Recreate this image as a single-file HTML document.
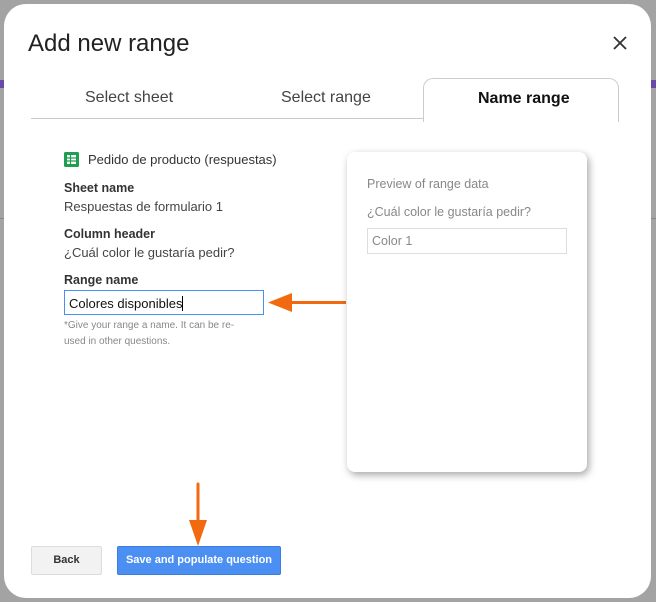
<!DOCTYPE html>
<html><head><meta charset="utf-8"><style>
*{margin:0;padding:0;box-sizing:border-box}
html,body{width:656px;height:602px;overflow:hidden;background:#a3a3a3;font-family:"Liberation Sans",sans-serif;position:relative}
.dlg{position:absolute;left:4px;top:4px;width:647px;height:594px;background:#fff;border-radius:22px}
.abs{position:absolute}
</style></head><body>
<div class="abs" style="left:0;top:80px;width:656px;height:8px;background:#6a4aa8"></div>
<div class="abs" style="left:0;top:218px;width:10px;height:1px;background:#888"></div>
<div class="abs" style="left:646px;top:218px;width:10px;height:1px;background:#888"></div>
<div class="dlg">
  <div class="abs" style="left:24px;top:26px;font-size:24px;color:#222">Add new range</div>
  <svg class="abs" style="left:609px;top:32px" width="14" height="14"><path d="M1 1L13 13M13 1L1 13" stroke="#333" stroke-width="1.8"/></svg>
  <div class="abs" style="left:27px;top:114px;width:398px;height:1px;background:#c8c8c8"></div>
  <div class="abs" style="left:419px;top:74px;width:196px;height:44px;border:1px solid #ccc;border-bottom:none;border-radius:10px 10px 0 0;background:#fff"></div>
  <div class="abs" style="left:81px;top:85px;font-size:16px;color:#444">Select sheet</div>
  <div class="abs" style="left:277px;top:85px;font-size:16px;color:#444">Select range</div>
  <div class="abs" style="left:474px;top:86px;font-size:16px;color:#111;font-weight:bold">Name range</div>

  <svg class="abs" style="left:60px;top:148px" width="15" height="15" viewBox="0 0 15 15"><rect width="15" height="15" rx="1.5" fill="#1e9e4f"/><rect x="3" y="3" width="9" height="9" fill="#fff"/><path d="M3 6h9M3 9h9M6.5 3v9" stroke="#1e9e4f" stroke-width="1.2"/></svg>
  <div class="abs" style="left:84px;top:148px;font-size:13px;color:#333">Pedido de producto (respuestas)</div>
  <div class="abs" style="left:60px;top:177px;font-size:12.5px;color:#333;font-weight:bold">Sheet name</div>
  <div class="abs" style="left:60px;top:195px;font-size:13px;color:#444">Respuestas de formulario 1</div>
  <div class="abs" style="left:60px;top:223px;font-size:12.5px;color:#333;font-weight:bold">Column header</div>
  <div class="abs" style="left:60px;top:241px;font-size:13px;color:#444">¿Cuál color le gustaría pedir?</div>
  <div class="abs" style="left:60px;top:269px;font-size:12.5px;color:#333;font-weight:bold">Range name</div>
  <div class="abs" style="left:60px;top:286px;width:200px;height:25px;border:1px solid #4a8ef0;font-size:13px;color:#111;padding:5px 0 0 4px">Colores disponibles<span style="display:inline-block;width:1px;height:15px;background:#000;vertical-align:-3px"></span></div>
  <div class="abs" style="left:60px;top:314px;font-size:10px;color:#888;line-height:16px;width:200px">*Give your range a name. It can be re-<br>used in other questions.</div>

  <svg class="abs" style="left:262px;top:288px" width="80" height="24"><path d="M80 10.5H20" stroke="#f26a10" stroke-width="3"/><path d="M2 10.5L26 1v19z" fill="#f26a10"/></svg>

  <div class="abs" style="left:343px;top:148px;width:240px;height:320px;background:#fff;border-radius:8px;box-shadow:2px 3px 8px rgba(0,0,0,.35)">
    <div class="abs" style="left:20px;top:25px;font-size:12.5px;color:#888">Preview of range data</div>
    <div class="abs" style="left:20px;top:53px;font-size:12.5px;color:#888">¿Cuál color le gustaría pedir?</div>
    <div class="abs" style="left:20px;top:76px;width:200px;height:26px;border:1px solid #ddd;font-size:12.5px;color:#888;padding:5px 0 0 4px">Color 1</div>
  </div>

  <svg class="abs" style="left:182px;top:478px" width="24" height="66"><path d="M12 2v40" stroke="#f26a10" stroke-width="3" stroke-linecap="round"/><path d="M3 38h18l-9 26z" fill="#f26a10"/></svg>

  <div class="abs" style="left:27px;top:542px;width:71px;height:29px;background:#f2f2f2;border:1px solid #dcdcdc;border-radius:2px;font-size:11px;font-weight:bold;color:#333;text-align:center;line-height:27px">Back</div>
  <div class="abs" style="left:113px;top:542px;width:164px;height:29px;background:#4b8ff3;border:1px solid #3b7de0;border-radius:2px;font-size:11px;font-weight:bold;color:#fff;text-align:center;line-height:27px">Save and populate question</div>
</div>
</body></html>
